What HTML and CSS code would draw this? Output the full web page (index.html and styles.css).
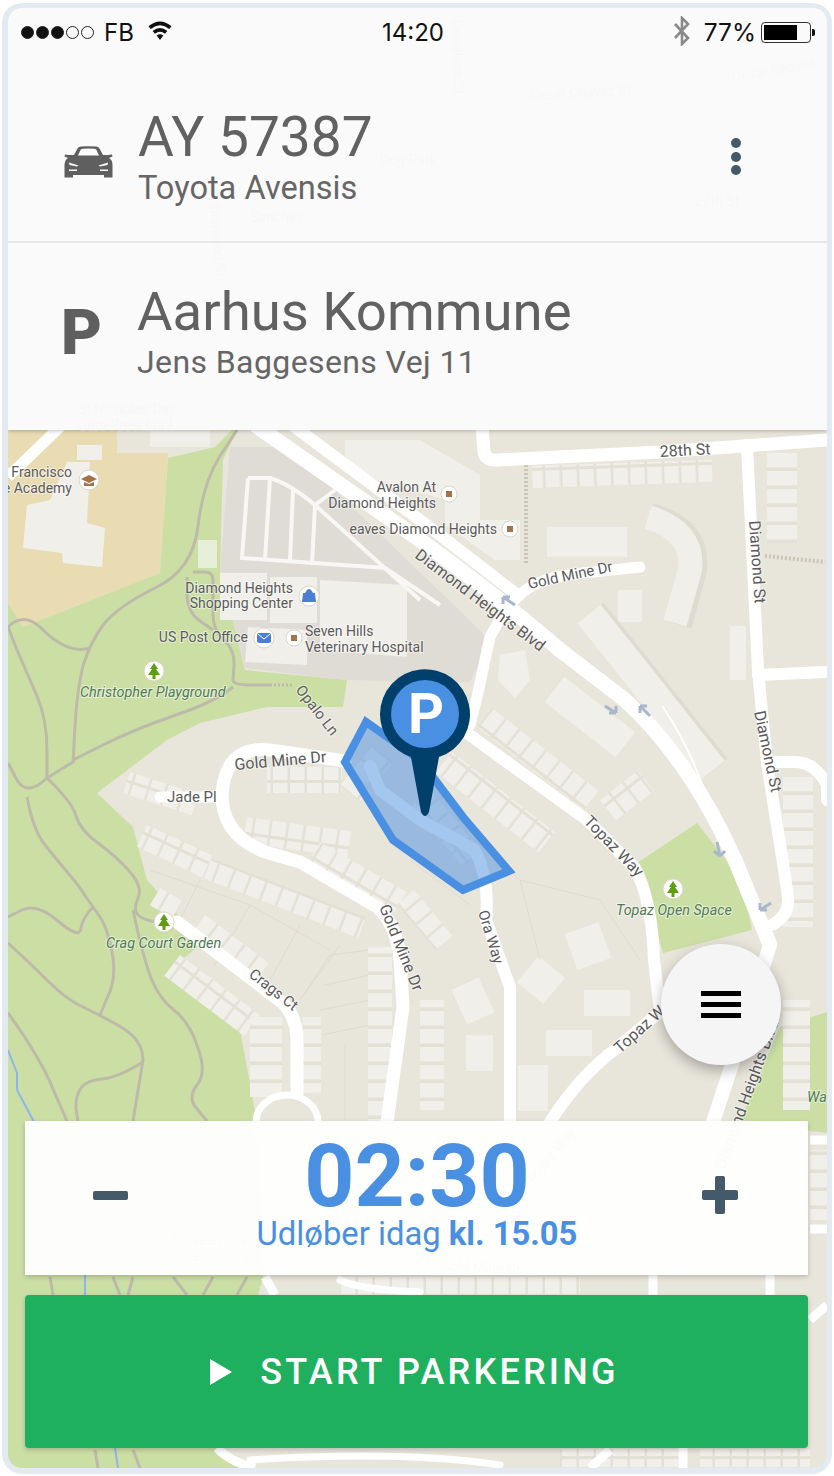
FILE: index.html
```html
<!DOCTYPE html>
<html lang="da">
<head>
<meta charset="utf-8">
<title>Start parkering</title>
<link rel="stylesheet" href="styles.css">
</head>
<body>
<main class="phone">
  <div class="screen">
    <svg class="map" viewBox="8 8 819 1460" width="819" height="1460" aria-hidden="true">
      <defs>
        <pattern id="row" patternUnits="userSpaceOnUse" width="17" height="26">
          <rect width="17" height="26" fill="#e3e0d6"/>
          <rect x="1" y="3" width="14.500" height="23" fill="#f1efe9"/>
        </pattern>
        <pattern id="rowh" patternUnits="userSpaceOnUse" width="30" height="18">
          <rect width="30" height="18" fill="#e3e0d6"/>
          <rect x="0" y="3" width="30" height="14.500" fill="#f1efe9"/>
        </pattern>
      </defs>
      <rect x="8" y="8" width="819" height="1460" fill="#e8e5db"/>

      <!-- areas -->
      <path d="M8 430H117V453H168L160 573L23 627L8 603Z" fill="#e9dcb3"/>
      <path d="M168 458L215 447L232 430H237L223 460L220 570L245 670L347 680L343 707L267 707L200 723L167 740L97 793L133 827L147 880L180 917L200 945L173 967L240 1030L257 1121L263 1277L217 1448L240 1468H8V603L23 627L160 573Z" fill="#cbdfa5"/>
      <path d="M697 823L637 863L663 953L752 930L742 880Z" fill="#cbdfa5"/>
      <path d="M827 1012L780 1027L740 1122L827 1133Z" fill="#cbdfa5"/>
      <path d="M230 447H290L490 640L470 682L345 680L245 668L220 570Z" fill="#dfdbd5"/>
      <rect x="198" y="540" width="19" height="28" fill="#e8efd8"/>

      <!-- large buildings -->
      <g fill="#f1efe9">
        <path d="M67 462H90L87 523L105 528L102 567L63 563L62 553L23 548L27 505L50 500Z"/>
        <path d="M77 445H102V460H77Z"/>
        <path d="M150 430H210V447H150Z"/>
        <path d="M220 573H267V620H220Z"/><path d="M270 577H317V623H270Z"/>
        <path d="M320 580L407 585V657L320 650Z"/><path d="M248 627L307 630V665L245 662Z"/>
        <path d="M345 440H420L480 475V520H520V560H495L445 525V500L345 470Z"/>
        <path d="M547 527H627V557H547Z"/>
        <path d="M618 590H642V622H618Z"/>
        <path d="M730 626H746V680H730Z"/>
        <path d="M500 655L525 650L530 680L515 698L498 680Z"/>
        <rect x="545" y="701" width="90" height="32" transform="rotate(38 590 717)"/>
        <rect x="570" y="927" width="36" height="38" transform="rotate(-20 588 946)"/>
        <rect x="524" y="963" width="34" height="34" transform="rotate(40 541 980)"/>
        <rect x="458" y="982" width="30" height="38" transform="rotate(-25 473 1001)"/>
        <rect x="584" y="990" width="46" height="26"/>
        <rect x="466" y="1035" width="27" height="36"/>
        <rect x="546" y="1030" width="46" height="26"/>
        <rect x="518" y="1065" width="30" height="46"/>
      </g>
      <path d="M650 515Q700 528 695 570L680 625" fill="none" stroke="#dedbd1" stroke-width="24"/>
      <path d="M648 517Q695 532 690 570L675 623" fill="none" stroke="#f1efe9" stroke-width="24"/>
      <path d="M592 612L640 672L716 768" fill="none" stroke="#dedbd1" stroke-width="30"/>
      <path d="M589 614L637 674L713 770" fill="none" stroke="#f1efe9" stroke-width="30"/>

      <!-- parcel lines -->
      <g fill="none" stroke="#dfdbd1" stroke-width="1">
        <path d="M370 950L330 955L300 1000M370 975L325 985M370 1000L320 1010M370 1025L322 1035M345 1045V1120"/>
        <path d="M150 870L250 905L330 950M200 880L165 950M250 905L215 965M300 925L265 990M340 945L300 1000"/>
        <path d="M430 800L520 880L540 960M410 860L470 905M520 880L600 900M600 900L640 960"/>
      </g>

      <!-- rows of houses -->
      <rect x="532" y="466" width="180" height="22" fill="url(#row)" transform="rotate(-2 532 466)"/>
      <rect x="767" y="453" width="30" height="90" fill="url(#rowh)"/>
      <rect x="783" y="777" width="30" height="150" fill="url(#rowh)"/>
      <rect x="783" y="1000" width="27" height="110" fill="url(#rowh)"/>
      <rect x="492" y="708" width="135" height="24" fill="url(#row)" transform="rotate(38 492 708)"/>
      <rect x="452" y="752" width="130" height="26" fill="url(#row)" transform="rotate(38 452 752)"/>
      <rect x="600" y="800" width="48" height="26" fill="url(#row)" transform="rotate(-38 600 800)"/>
      <rect x="267" y="767" width="75" height="26" fill="url(#row)"/>
      <rect x="247" y="817" width="105" height="26" fill="url(#row)" transform="rotate(8 247 817)"/>
      <rect x="340" y="785" width="52" height="26" fill="url(#row)" transform="rotate(-50 340 785)"/>
      <rect x="320" y="842" width="100" height="24" fill="url(#row)" transform="rotate(30 320 842)"/>
      <rect x="212" y="858" width="165" height="22" fill="url(#row)" transform="rotate(21 212 858)"/>
      <rect x="130" y="772" width="72" height="22" fill="url(#row)" transform="rotate(18 130 772)"/>
      <rect x="147" y="825" width="72" height="24" fill="url(#row)" transform="rotate(25 147 825)"/>
      <rect x="160" y="888" width="26" height="20" fill="url(#row)" transform="rotate(30 160 888)"/>
      <rect x="180" y="955" width="100" height="26" fill="url(#row)" transform="rotate(37 180 955)"/>
      <rect x="205" y="915" width="80" height="20" fill="url(#row)" transform="rotate(37 205 915)"/>
      <rect x="250" y="1017" width="32" height="80" fill="url(#rowh)"/>
      <rect x="303" y="1017" width="18" height="76" fill="url(#rowh)"/>
      <rect x="368" y="947" width="24" height="175" fill="url(#rowh)"/>
      <rect x="414" y="890" width="60" height="22" fill="url(#row)" transform="rotate(50 414 890)"/>
      <rect x="420" y="1000" width="24" height="110" fill="url(#rowh)"/>
      <rect x="430" y="790" width="80" height="24" fill="url(#row)" transform="rotate(50 430 790)"/>
      <rect x="340" y="1276" width="240" height="18" fill="url(#row)"/>
      <rect x="560" y="1449" width="120" height="18" fill="url(#row)"/>
      <rect x="700" y="1449" width="110" height="18" fill="url(#row)"/>
      <rect x="810" y="1150" width="17" height="70" fill="url(#rowh)"/>

      <!-- trails -->
      <g fill="none" stroke="#bdbaa9" stroke-width="3" stroke-linejoin="round">
        <path d="M237 430L220 456Q203 483 198 526Q193 570 155 588Q117 607 103 625Q90 643 83 666Q77 690 75 726L73 763"/>
        <path d="M193 572H205Q213 572 213 580V615Q213 630 224 640Q235 650 234 666L233 680Q233 685 252 685H270"/>
        <path d="M270 685H293" stroke-dasharray="2 2"/>
        <path d="M233 687Q213 703 173 716Q133 730 103 745L73 760"/>
        <path d="M187 577L187 595Q188 613 200 621L213 630"/>
        <path d="M8 627Q23 612 40 627Q67 655 90 648"/>
        <path d="M8 627L17 650Q27 673 37 696Q47 720 47 750L47 778Q27 797 17 780L8 763"/>
        <path d="M73 762L47 778"/>
        <path d="M27 797Q33 830 45 845Q57 860 68 873Q80 887 86 897Q93 907 100 917Q107 927 112 952Q117 977 108 996L100 1015"/>
        <path d="M47 778Q73 803 76 816Q80 830 98 843Q117 857 130 872Q143 887 138 898Q133 910 138 915Q143 920 157 922"/>
        <path d="M133 910Q143 957 151 978Q160 1000 175 1011Q190 1023 198 1048Q207 1073 197 1085Q187 1098 197 1109L207 1121"/>
        <path d="M8 917L22 910Q37 903 58 921Q80 940 81 928Q83 917 93 907"/>
        <path d="M8 943Q30 963 48 981Q67 1000 83 1007Q100 1015 121 1027Q143 1040 143 1060L133 1121"/>
        <path d="M8 1013Q40 1057 53 1089L67 1121"/>
        <path d="M143 1062Q117 1078 102 1079Q87 1080 81 1088Q75 1097 76 1109L78 1121"/>
        <path d="M50 1277L53 1295"/><path d="M113 1277L120 1295"/><path d="M133 1277L128 1295"/>
        <path d="M173 1277L187 1295"/><path d="M213 1277L203 1295"/><path d="M247 1277L237 1295"/>
        <path d="M95 1450L98 1468"/><path d="M133 1450L140 1468"/>
      </g>
      <path d="M8 1050L17 1073L17 1090L33 1120L85 1275V1295M115 1448L118 1468" fill="none" stroke="#8fb5ea" stroke-width="2"/>
      <path d="M526 465V565" stroke="#c9c5b6" stroke-width="4" stroke-dasharray="2 2" fill="none"/>
      <path d="M765 556L825 562" stroke="#c9c5b6" stroke-width="4" stroke-dasharray="2 2" fill="none"/>

      <!-- parking lanes -->
      <g fill="none" stroke="#f8f7f4" stroke-width="4">
        <path d="M248 478H270Q290 484 315 505L420 600M248 478L242 558L385 568L440 605M270 478L265 560M293 490L290 562M315 505L312 565M315 505L335 490"/>
      </g>

      <!-- roads -->
      <g fill="none" stroke="#fff" stroke-linecap="round" stroke-linejoin="round">
        <path d="M255 425L420 540Q500 598 560 650L625 700Q690 760 735 860L770 945" stroke-width="15" stroke-linecap="butt"/>
        <path d="M292 425L440 535L520 597" stroke-width="12" stroke-linecap="butt"/>
        <path d="M663 707Q695 755 712 815" stroke-width="2"/>
        <path d="M770 945L740 1040L712 1125" stroke-width="14"/>
        <path d="M482 425L484 452Q486 461 497 460L660 452L827 440" stroke-width="13"/>
        <path d="M747 445L758 670L767 763L783 863L788 897Q790 915 772 925" stroke-width="12"/>
        <path d="M758 675L827 672" stroke-width="12"/>
        <path d="M767 762H795Q815 762 827 785V800" stroke-width="12"/>
        <path d="M640 567L593 572Q550 575 530 587T490 637L477 697L470 725" stroke-width="11"/>
        <path d="M460 728L587 820L635 868Q652 900 654 960L660 1012L617 1048Q580 1075 550 1122" stroke-width="12"/>
        <path d="M345 761L270 750Q225 745 222 795Q222 835 265 852L300 862L377 907Q397 925 400 960L403 1007L387 1122" stroke-width="13"/>
        <path d="M370 766L380 790L420 820L475 850Q490 880 486 920L510 987V1122" stroke-width="12"/>
        <path d="M160 797H222" stroke-width="11"/>
        <path d="M177 922L283 1003Q297 1018 297 1040V1093" stroke-width="13"/>
        <ellipse cx="287" cy="1122" rx="31" ry="27" stroke-width="7"/>
        <path d="M62 425L8 477" stroke-width="11" stroke-linecap="butt"/>
        <path d="M810 1140H827M810 1229H827M653 1275V1295M770 1275V1295M827 1305L810 1320M683 1448V1468M590 1468L610 1450M265 1277L275 1295M217 1448Q230 1462 255 1468" stroke-width="9" stroke-linecap="butt"/>
        <path d="M250 1460Q400 1450 500 1465" stroke-width="7"/>
        <path d="M340 1280Q360 1290 420 1292" stroke-width="7"/>
      </g>

      <!-- direction arrows -->
      <g fill="none" stroke="#a9b7cc" stroke-width="3">
        <path d="M503 597L515 605M503 597V604M503 597H510"/>
        <path d="M605 706L616 713M616 713V706M616 713H609"/>
        <path d="M640 706L650 716M640 706V713M640 706H647"/>
        <path d="M717 842L720 856M720 856L714 851M720 856L725 851"/>
        <path d="M771 903L760 910M760 910H767M760 910V903"/>
      </g>

      <!-- ghost labels under the panels -->
      <g class="lbl">
        <text x="530" y="100" transform="rotate(-3 530 100)">Cesar Chavez St</text>
        <text x="733" y="82" transform="rotate(-10 733 82)">Cesar Chavez</text>
        <text x="695" y="206">27th St</text>
        <text x="452" y="20" transform="rotate(88 452 20)">Douglass St</text>
        <text x="250" y="222">Sanchez</text>
        <text x="380" y="165">Dog Park</text>
        <text x="210" y="205" transform="rotate(85 210 205)">Diamond St</text>
        <text x="78" y="414">St Nicholas Day</text>
        <text x="78" y="430">Care·Preschool</text>
        <text x="172" y="1245" class="park">Berkeley Way</text>
        <text x="176" y="1261" class="park">Open Space</text>
        <text x="532" y="1185" transform="rotate(-50 532 1185)">Topaz Way</text>
        <text x="440" y="1270" transform="rotate(3 440 1270)">Gold Mine Dr</text>
      </g>

      <!-- map labels -->
      <g class="lbl">
        <text x="660" y="457" class="big" transform="rotate(-3 660 457)">28th St</text>
        <text x="72" y="477" text-anchor="end">Francisco</text>
        <text x="72" y="493" text-anchor="end">e Academy</text>
        <text x="436" y="492" text-anchor="end">Avalon At</text>
        <text x="436" y="508" text-anchor="end">Diamond Heights</text>
        <text x="497" y="534" text-anchor="end">eaves Diamond Heights</text>
        <text x="293" y="593" text-anchor="end">Diamond Heights</text>
        <text x="293" y="608" text-anchor="end">Shopping Center</text>
        <text x="248" y="642" text-anchor="end">US Post Office</text>
        <text x="305" y="636">Seven Hills</text>
        <text x="305" y="652">Veterinary Hospital</text>
        <text x="80" y="697" class="park">Christopher Playground</text>
        <text x="295" y="690" class="mid" transform="rotate(52 295 690)">Opalo Ln</text>
        <text x="235" y="770" class="big" transform="rotate(-5 235 770)">Gold Mine Dr</text>
        <text x="167" y="802" class="mid">Jade Pl</text>
        <text x="529" y="589" class="mid" transform="rotate(-12 529 589)">Gold Mine Dr</text>
        <text x="414" y="557" class="big" transform="rotate(37 414 557)">Diamond Heights Blvd</text>
        <text x="749" y="521" class="big" transform="rotate(86 749 521)">Diamond St</text>
        <text x="754" y="712" class="big" transform="rotate(78 754 712)">Diamond St</text>
        <text x="583" y="822" class="big" transform="rotate(46 583 822)">Topaz Way</text>
        <text x="616" y="915" class="park">Topaz Open Space</text>
        <text x="478" y="912" class="mid" transform="rotate(73 478 912)">Ora Way</text>
        <text x="379" y="907" class="big" transform="rotate(68 379 907)">Gold Mine Dr</text>
        <text x="248" y="976" class="mid" transform="rotate(38 248 976)">Crags Ct</text>
        <text x="106" y="948" class="park">Crag Court Garden</text>
        <text x="620" y="1054" class="big" transform="rotate(-42 620 1054)">Topaz Way</text>
        <text x="725" y="1170" class="big" transform="rotate(-70 725 1170)">Diamond Heights Blvd</text>
        <text x="807" y="1102" class="park">Wa</text>
      </g>

      <!-- map pins -->
      <g stroke="#d9d6cc" fill="#fff">
        <circle cx="89" cy="480" r="10"/><circle cx="449" cy="494" r="8"/><circle cx="510" cy="529" r="8"/>
        <circle cx="309" cy="596" r="10"/><circle cx="264" cy="638" r="10"/><circle cx="294" cy="638" r="8"/>
        <circle cx="154" cy="671" r="10"/><circle cx="673" cy="889" r="10"/><circle cx="164" cy="922" r="10"/>
      </g>
      <path d="M81 479L89 475L97 479L89 483ZM84 482V486H94V482L89 484Z" fill="#a5734a"/>
      <g fill="#a5734a"><rect x="446" y="491" width="6" height="6"/><rect x="507" y="526" width="6" height="6"/><rect x="291" y="635" width="6" height="6"/></g>
      <path d="M303 593H315L316 602H302ZM305 593Q309 585 313 593" fill="#4a7fd4"/>
      <rect x="257" y="633" width="14" height="10" rx="2" fill="#4a7fd4"/>
      <path d="M258 634L264 639L270 634" fill="none" stroke="#fff"/>
      <g fill="#5f9e12">
        <path d="M154 663L158 669H156L160 675H155.500V679H152.500V675H148L152 669H150Z"/>
        <path d="M673 881L677 887H675L679 893H674.500V897H671.500V893H667L671 887H669Z"/>
        <path d="M164 914L168 920H166L170 926H165.500V930H162.500V926H158L162 920H160Z"/>
      </g>

      <!-- parking zone -->
      <path d="M366 722L345 762L393 840L463 890L509 871L463 817L420 760Z" fill="#4a90e2" fill-opacity=".5" stroke="#4a90e2" stroke-width="8"/>

      <!-- pin -->
      <path d="M380 714A45 45 0 1 1 439 757L429 812Q425 820 421 812L411 757A45 45 0 0 1 380 714Z" fill="#00406b"/>
      <circle cx="425" cy="714" r="34" fill="#4a90e2"/>
      <text x="426" y="733" class="pin-p" text-anchor="middle">P</text>
    </svg>

    <header class="top">
      <div class="status">
        <div class="status-left">
          <span class="signal"><i class="on"></i><i class="on"></i><i class="on"></i><i></i><i></i></span>
          <span>FB</span>
          <svg class="wifi" viewBox="0 0 24 20" width="26" height="21"><path d="M1 6Q12 -3 23 6L20.800 8.500Q12 1.500 3.200 8.500ZM5 10.500Q12 4.500 19 10.500L16.800 13Q12 9.500 7.200 13ZM8.800 14.700Q12 12.300 15.200 14.700L12 19Z"/></svg>
        </div>
        <div class="status-time">14:20</div>
        <div class="status-right">
          <svg class="bt" viewBox="0 0 18 30" width="18" height="30"><path d="M2 8L15 22L9 28V2L15 8L2 22" fill="none" stroke="#8a8a8a" stroke-width="2.600"/></svg>
          <span class="pct">77%</span>
          <span class="battery"><span class="battery-fill"></span></span>
        </div>
      </div>

      <section class="row row-vehicle">
        <svg class="car" viewBox="0 0 49 32" width="49" height="32">
          <path fill="#5f5f5f" d="M10 9L13.500 2.500Q14.500 .8 17 .6Q24.500 0 32 .6Q34.500 .8 35.500 2.500L39 9H44L48 8.500L48.500 10.500L45 12Q48.500 14 48.500 19V31.500H40V29H9V31.500H.5V19Q.5 14 4 12L.5 10.500L1 8.500L5 9ZM14 9.500H35L32.500 4Q32 2.800 30 2.700Q24.500 2.300 19 2.700Q17 2.800 16.500 4ZM5 16.500L5.500 19L13 20.500L14.500 19.500ZM44 16.500L34.500 19.500L36 20.500L43.500 19Z M5 23.500H13V25H5ZM36 23.500H44V25H36Z" fill-rule="evenodd"/>
        </svg>
        <div class="info">
          <h1 class="title">AY 57387</h1>
          <p class="sub">Toyota Avensis</p>
        </div>
        <div class="kebab"><i></i><i></i><i></i></div>
      </section>

      <section class="row row-zone">
        <span class="zone-p">P</span>
        <div class="info">
          <h2 class="title">Aarhus Kommune</h2>
          <p class="sub sub-spaced">Jens Baggesens Vej 11</p>
        </div>
      </section>
    </header>

    <div class="spacer">
      <button class="fab" type="button" aria-label="Menu"><i></i><i></i><i></i></button>
    </div>

    <section class="timer">
      <span class="minus"></span>
      <div class="clock">
        <div class="time">02:30</div>
        <div class="expires">Udløber idag <b>kl. 15.05</b></div>
      </div>
      <span class="plus"></span>
    </section>

    <button class="start" type="button">
      <svg viewBox="0 0 22 26" width="22" height="26"><path d="M0 0L22 13L0 26Z" fill="#fff"/></svg>
      <span>START PARKERING</span>
    </button>
  </div>
</main>
</body>
</html>
```
FILE: styles.css
```css
* { box-sizing: border-box; }
html, body { margin: 0; padding: 0; background: #fff; }
body { font-family: Roboto, "Liberation Sans", sans-serif; overflow: hidden; }

.phone {
  width: 830px;
  height: 1471px;
  margin: 3px 0 0 2px;
  border: solid #e3eaf1;
  border-width: 5px 5px 6px 6px;
  border-radius: 20px;
}
.screen {
  position: relative;
  width: 819px;
  height: 1460px;
  border-radius: 14px;
  overflow: hidden;
  display: flex;
  flex-direction: column;
  padding-bottom: 20px;
}
.map { position: absolute; left: 0; top: 0; display: block; }

.lbl text { font: 400 14px Roboto, sans-serif; fill: #5a5a5a; stroke: #fff; stroke-width: 2px; stroke-opacity: .55; paint-order: stroke; }
.lbl text.big { font-size: 16px; }
.lbl text.mid { font-size: 15px; }
.lbl text.park { font-style: italic; font-size: 14.400px; fill: #4f7a52; }
.pin-p { font: 700 56px Roboto, sans-serif; fill: #fff; }

.top {
  position: relative;
  flex: none;
  height: 422px;
  background: rgba(250, 250, 250, .98);
  box-shadow: 0 1px 4px rgba(0, 0, 0, .25);
  display: flex;
  flex-direction: column;
}

.status {
  position: relative;
  height: 44px;
  display: flex;
  align-items: center;
  justify-content: space-between;
  padding: 4px 16px 0 13px;
  font: 400 24px Inter, "Liberation Sans", sans-serif;
  color: #111;
}
.status-left, .status-right { display: flex; align-items: center; }
.status-left { gap: 10px; }
.status-right { gap: 13px; }
.pct { font-size: 24.500px; }
.status-right .battery { margin-left: -8px; }
.status-time { position: absolute; left: 374px; top: 10px; line-height: 30px; }
.signal { display: flex; gap: 2px; }
.signal i { width: 13px; height: 13px; border-radius: 50%; border: 1px solid #222; }
.signal i.on { background: #111; }
.wifi { fill: #111; margin: -4px 0 0 3px; }
.bt { margin-top: -2px; }
.battery {
  position: relative;
  width: 50px;
  height: 21px;
  border: 1.500px solid #333;
  border-radius: 4px;
  padding: 2px;
  display: block;
}
.battery::after {
  content: "";
  position: absolute;
  right: -5px;
  top: 6px;
  width: 3px;
  height: 7px;
  background: #111;
  border-radius: 0 2px 2px 0;
}
.battery-fill { display: block; width: 33px; height: 100%; background: #000; }

.row { display: flex; align-items: center; position: relative; }
.row-vehicle { height: 191px; padding: 0 0 0 56px; gap: 26px; border-bottom: 2px solid #e9e9e8; }
.row-zone { flex: 1; padding: 0 0 0 53px; }
.car { flex: none; margin-top: 31px; }
.info { display: flex; flex-direction: column; }
.title { margin: 0; font-size: 54.500px; line-height: 60px; font-weight: 400; color: #616161; }
.row-vehicle .title { font-size: 55px; }
.sub { margin: 2px 0 0; font-size: 32.600px; line-height: 38px; color: #666; }
.row-vehicle .info { margin-top: 21px; margin-left: -1px; }
.row-zone .info { margin-top: -12px; margin-left: 38px; }
.sub-spaced { font-size: 32px; letter-spacing: .4px; }
.zone-p { font-size: 63px; line-height: 66px; font-weight: 900; color: #5f5f5f; width: 38px; margin-top: -8px; }

.kebab { position: absolute; left: 723px; top: 86px; display: flex; flex-direction: column; gap: 3.500px; }
.kebab i { width: 10px; height: 10px; border-radius: 50%; background: #44596a; }

.spacer { flex: 1; position: relative; }
.fab {
  position: absolute;
  left: 653px;
  top: 514px;
  width: 120px;
  height: 121px;
  padding: 0;
  border: 0;
  border-radius: 50%;
  background: #f5f5f5;
  box-shadow: 0 5px 14px rgba(0, 0, 0, .3);
  display: flex;
  flex-direction: column;
  align-items: center;
  justify-content: center;
  gap: 6px;
}
.fab i { display: block; width: 40px; height: 5px; background: #000; }

.timer {
  position: relative;
  flex: none;
  height: 154px;
  margin: 0 19px 20px 17px;
  background: rgba(254, 254, 253, .98);
  box-shadow: 0 2px 5px rgba(0, 0, 0, .2);
  display: flex;
  align-items: center;
  justify-content: center;
}
.minus {
  position: absolute;
  left: 68px;
  top: 70px;
  width: 35px;
  height: 9px;
  border-radius: 2px;
  background: #44596a;
}
.plus { position: absolute; left: 677px; top: 55px; width: 36px; height: 38px; }
.plus::before, .plus::after { content: ""; position: absolute; background: #44596a; border-radius: 2px; }
.plus::before { left: 0; right: 0; top: 14px; height: 10px; }
.plus::after { top: 0; bottom: 0; left: 13px; width: 10px; }
.clock { text-align: center; color: #4a90e2; margin: 0 0 6px 1px; }
.time { font-size: 87.500px; line-height: 78px; font-weight: 700; }
.expires { font-size: 32.800px; line-height: 38px; }
.expires b { font-weight: 700; }

.start {
  position: relative;
  flex: none;
  height: 153px;
  margin: 0 19px 0 17px;
  border: 0;
  border-radius: 4px;
  background: #1eb05e;
  box-shadow: 0 2px 5px rgba(0, 0, 0, .2);
  color: #fff;
  font: 500 36px Roboto, sans-serif;
  letter-spacing: 3.200px;
  display: flex;
  align-items: center;
  justify-content: center;
  gap: 28px;
  padding: 0 4px 0 0;
}
```
